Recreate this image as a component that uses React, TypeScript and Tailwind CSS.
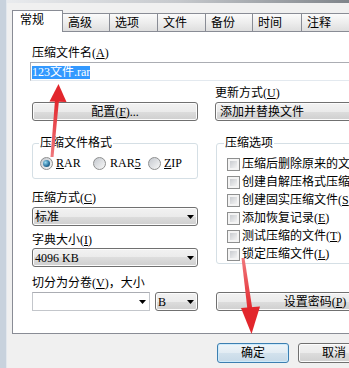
import type { ReactNode } from 'react'

const face =
  'rounded-[3px] border border-[#707070] bg-[linear-gradient(#f2f2f2,#ebebeb_50%,#dddddd_50%,#cfcfcf)] shadow-[inset_0_0_0_1px_#fcfcfc]'

const tabs = [
  { label: '高级', w: 'w-[47px]' },
  { label: '选项', w: 'w-[48px]' },
  { label: '文件', w: 'w-[48px]' },
  { label: '备份', w: 'w-[47px]' },
  { label: '时间', w: 'w-[49px]' },
  { label: '注释', w: 'w-[48px]' },
]

const options = [
  { text: '压缩后删除原来的文件', key: 'D' },
  { text: '创建自解压格式压缩文件', key: 'X' },
  { text: '创建固实压缩文件', key: 'S' },
  { text: '添加恢复记录', key: 'E' },
  { text: '测试压缩的文件', key: 'T' },
  { text: '锁定压缩文件', key: 'L' },
]

function Hot({ text, k, tail }: { text: string; k: string; tail?: string }) {
  return (
    <>
      {text}(<u>{k}</u>){tail}
    </>
  )
}

function Arrow() {
  return (
    <svg width="7" height="4" viewBox="0 0 7 4" className="shrink-0">
      <path d="M0 0h7L3.5 4z" fill="#000" />
    </svg>
  )
}

function Select({ children, className }: { children: ReactNode; className: string }) {
  return (
    <div className={`flex h-[19px] items-center whitespace-nowrap ${face} ${className}`}>
      <span className="flex-1">{children}</span>
      <span className="mr-[3px] flex">
        <Arrow />
      </span>
    </div>
  )
}

function Button({ children, className }: { children: ReactNode; className: string }) {
  return (
    <div className={`flex h-[19px] shrink-0 items-center justify-center whitespace-nowrap ${face} ${className}`}>
      {children}
    </div>
  )
}

function Radio({ checked }: { checked?: boolean }) {
  return (
    <span className="relative h-[13px] w-[13px] shrink-0 rounded-full border border-[#8e8f8f] bg-[linear-gradient(135deg,#c4c8ce,#f8f8f8)]">
      {checked ? (
        <span className="absolute inset-[2px] rounded-full bg-[radial-gradient(circle_at_35%_35%,#9adcf2,#2d76a2_55%,#0c3a58)]" />
      ) : null}
    </span>
  )
}

function Checkbox() {
  return (
    <span className="h-[13px] w-[13px] shrink-0 border border-[#8e8f8f] bg-[#f4f4f4] p-[2px]">
      <span className="block h-full w-full bg-[linear-gradient(135deg,#c9ccd0,#f3f3f3)]" />
    </span>
  )
}

function RedArrows() {
  return (
    <svg className="pointer-events-none absolute left-0 top-0" width="349" height="368" viewBox="0 0 349 368">
      <defs>
        <linearGradient id="s1" x1="0" y1="1" x2="0" y2="0">
          <stop offset="0" stopColor="#f0787c" />
          <stop offset="1" stopColor="#e2262c" />
        </linearGradient>
        <linearGradient id="s2" x1="0" y1="0" x2="0" y2="1">
          <stop offset="0" stopColor="#f0787c" />
          <stop offset="1" stopColor="#e2262c" />
        </linearGradient>
      </defs>
      <polygon points="50.5,157 53.5,157 59,100 55,100" fill="url(#s1)" />
      <polygon points="58.5,84 66.5,102 49.5,101.5" fill="#e2262c" />
      <polygon points="241.5,258 244.5,258 252.5,310 247.5,310" fill="url(#s2)" />
      <polygon points="251.5,334 241,308 260,306.5" fill="#e2262c" />
    </svg>
  )
}

export default function App() {
  return (
    <div className="relative flex h-[368px] w-[349px] overflow-hidden bg-[#f0f0f0] text-[12px] leading-[14px] text-black [font-family:'Liberation_Serif','Noto_Sans_CJK_SC',serif]">
      <div className="w-[7px] shrink-0 border-r border-[#e2e7ed] bg-[#c8d2dd]" />
      <div className="flex min-w-0 flex-1 flex-col">
        <div className="h-[3px] shrink-0 bg-[linear-gradient(90deg,#e9ebee,#c6c9cd_50%,#7f848a)]" />
        <div className="pl-[5px] pt-[7px]">
          <div className="relative z-10 -mb-px flex h-[22px] items-end">
            <div className="h-[22px] w-[51px] shrink-0 border-x border-t border-[#898c95] bg-white pl-[7px] pt-[2px]">
              常规
            </div>
            {tabs.map((t) => (
              <div
                key={t.label}
                className={`flex h-[19px] shrink-0 items-center border-y border-r border-[#898c95] bg-[linear-gradient(#fbfbfb,#ececec_55%,#dedede)] pl-[5px] ${t.w}`}
              >
                {t.label}
              </div>
            ))}
          </div>

          <div className="h-[303px] w-[380px] border border-[#898c95] bg-white pl-[19px] pt-[14px]">
            <div className="whitespace-nowrap">
              <Hot text="压缩文件名" k="A" />
            </div>
            <div className="-ml-[2px] mt-[2px] h-[19px] w-[345px] border border-[#abadb3] border-b-[#e3e9ef] border-r-[#dbdfe6] pl-[1px] pt-[2px]">
              <span className="inline-block bg-[#3399ff] leading-[13px] text-white">123文件.rar</span>
            </div>

            <div className="mt-[5px] flex items-end gap-[17px]">
              <Button className="w-[166px]">
                <Hot text="配置" k="F" tail="..." />
              </Button>
              <div className="w-[166px] shrink-0">
                <div className="whitespace-nowrap">
                  <Hot text="更新方式" k="U" />
                </div>
                <Select className="mt-[2px] pl-[4px]">添加并替换文件</Select>
              </div>
            </div>

            <div className="mt-[15px] flex gap-[18px]">
              <div className="flex w-[166px] shrink-0 flex-col">
                <fieldset className="rounded-[3px] border border-[#d5dfe5] px-[6px] pb-[8px] pt-[6px]">
                  <legend className="px-[1px]">压缩文件格式</legend>
                  <div className="ml-[1px] flex h-[14px] items-center">
                    <div className="flex w-[53px] items-center gap-[3px]">
                      <Radio checked />
                      <span>
                        <u>R</u>AR
                      </span>
                    </div>
                    <div className="flex w-[55px] items-center gap-[4px]">
                      <Radio />
                      <span>
                        RAR<u>5</u>
                      </span>
                    </div>
                    <div className="flex items-center gap-[3px]">
                      <Radio />
                      <span>
                        <u>Z</u>IP
                      </span>
                    </div>
                  </div>
                </fieldset>

                <div className="mt-[12px] whitespace-nowrap">
                  <Hot text="压缩方式" k="C" />
                </div>
                <Select className="mt-[2px] pl-[2px]">标准</Select>

                <div className="mt-[7px] whitespace-nowrap">
                  <Hot text="字典大小" k="I" />
                </div>
                <Select className="mt-[1px] pl-[2px]">4096 KB</Select>

                <div className="mt-[9px] whitespace-nowrap">
                  <Hot text="切分为分卷" k="V" tail="，大小" />
                </div>
                <div className="mt-[2px] flex gap-[5px]">
                  <div className="flex h-[19px] w-[118px] items-center justify-end border border-[#c3c6cb] border-t-[#abadb3] bg-white pr-[3px]">
                    <Arrow />
                  </div>
                  <Select className="flex-1 pl-[2px]">B</Select>
                </div>
              </div>

              <div className="flex w-[200px] shrink-0 flex-col">
                <fieldset className="rounded-[3px] border border-[#d5dfe5] px-[7px] pb-0 pt-[5px]">
                  <legend className="px-[1px]">压缩选项</legend>
                  {options.map((o) => (
                    <div key={o.key} className="ml-[3px] flex h-[18px] items-center gap-[2px] whitespace-nowrap">
                      <Checkbox />
                      <span>
                        <Hot text={o.text} k={o.key} />
                      </span>
                    </div>
                  ))}
                </fieldset>
                <Button className="mt-[28px] w-[198px]">
                  <Hot text="设置密码" k="P" />
                </Button>
              </div>
            </div>
          </div>
        </div>

        <div className="mt-[9px] flex gap-[9px] pl-[210px]">
          <div className="flex h-[20px] w-[72px] shrink-0 items-center justify-center rounded-[3px] border border-[#3c7fb1] bg-[linear-gradient(#eef5fa,#e2ecf3_50%,#d3e2ed_50%,#c6d9e7)] shadow-[inset_0_0_0_1px_#cdeafb]">
            确定
          </div>
          <Button className="h-[20px] w-[72px]">取消</Button>
        </div>
      </div>
      <RedArrows />
    </div>
  )
}
